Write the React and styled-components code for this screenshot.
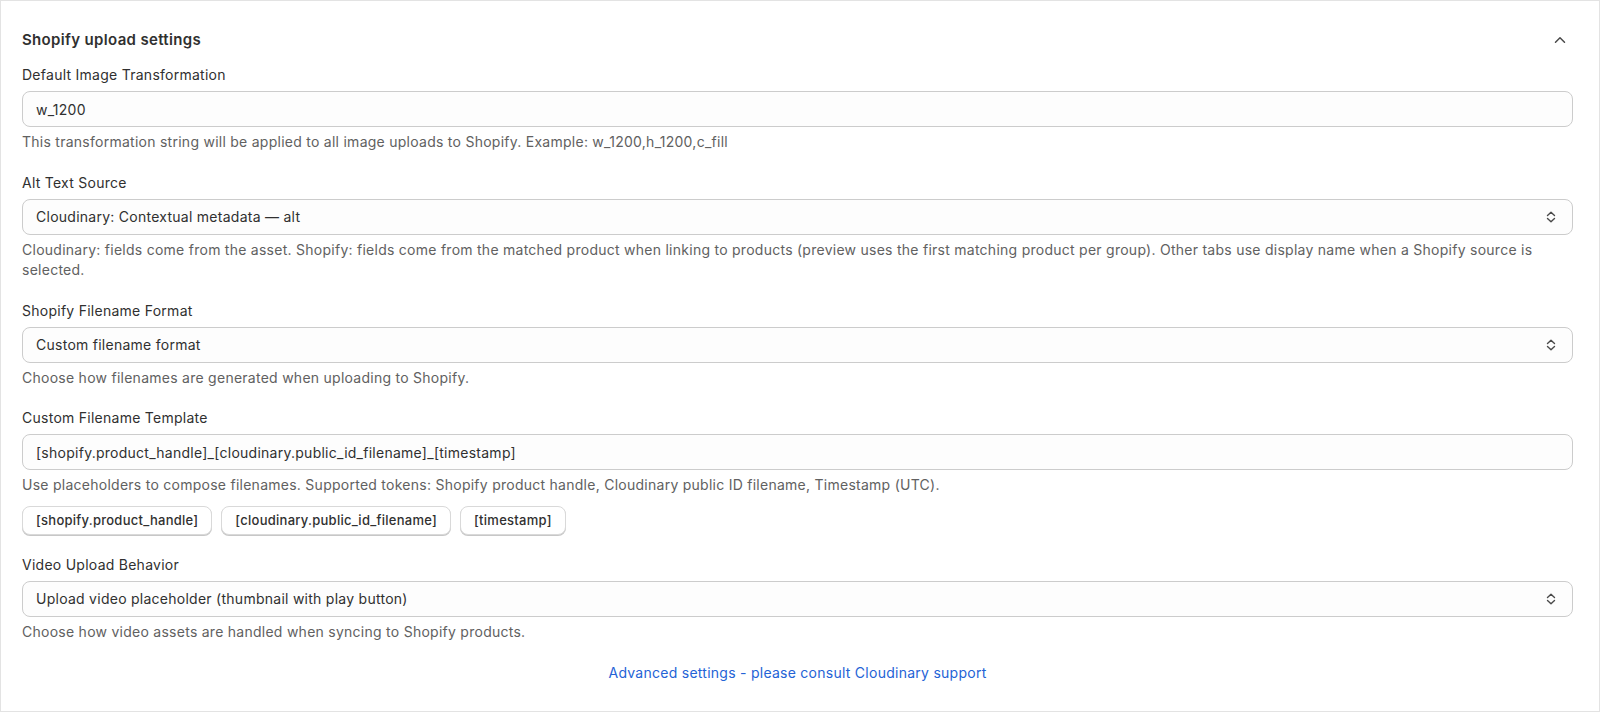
import styled, { createGlobalStyle } from "styled-components";

const GlobalStyle = createGlobalStyle`
  * {
    box-sizing: border-box;
  }
  body {
    margin: 0;
    background: #ffffff;
    font-family: Inter, "Noto Sans", sans-serif;
    letter-spacing: 0.26px;
    color: #303030;
    -webkit-font-smoothing: antialiased;
  }
`;

const Card = styled.section`
  height: 100vh;
  overflow: hidden;
  border: 1px solid #e3e3e3;
  background: #ffffff;
  padding: 27px 26px 0 21px;
`;

const Header = styled.div`
  display: flex;
  align-items: center;
  justify-content: space-between;
  height: 24px;
`;

const Title = styled.h2`
  margin: 0;
  font-size: 15px;
  line-height: 24px;
  font-weight: 600;
  letter-spacing: 0.34px;
  color: #303030;
`;

const Toggle = styled.button`
  width: 20px;
  height: 20px;
  margin-right: 3px;
  padding: 0;
  border: none;
  background: transparent;
  display: flex;
  align-items: center;
  justify-content: center;
  cursor: pointer;
`;

const Fields = styled.div`
  display: flex;
  flex-direction: column;
  gap: 20px;
  margin-top: 13px;
`;

const Field = styled.div`
  display: flex;
  flex-direction: column;
`;

const Label = styled.label`
  font-size: 14px;
  line-height: 20px;
  color: #303030;
  margin-bottom: 6px;
`;

const TextInput = styled.input`
  height: 36px;
  width: 100%;
  padding: 0 13px;
  border: 1px solid #cccccc;
  border-radius: 8px;
  background: #fdfdfd;
  font-family: inherit;
  font-size: 14px;
  letter-spacing: inherit;
  color: #303030;
  outline: none;
`;

const SelectWrap = styled.div`
  position: relative;
`;

const Select = styled.select`
  appearance: none;
  height: 36px;
  width: 100%;
  padding: 0 40px 0 13px;
  border: 1px solid #cccccc;
  border-radius: 8px;
  background: #fdfdfd;
  font-family: inherit;
  font-size: 14px;
  letter-spacing: inherit;
  color: #303030;
  outline: none;
`;

const SelectIcon = styled.span`
  position: absolute;
  right: 12px;
  top: 8px;
  width: 20px;
  height: 20px;
  pointer-events: none;
`;

const Help = styled.p`
  margin: 5px 0 0;
  font-size: 14px;
  line-height: 20.5px;
  color: #616161;
`;

const Chips = styled.div`
  display: flex;
  gap: 9px;
  margin-top: 10px;
`;

const Chip = styled.button`
  height: 29px;
  padding: 0 13px;
  border: 1px solid #d9d9d9;
  border-radius: 8px;
  background: #ffffff;
  box-shadow: 0 1px 0 #c7c7c7;
  font-family: inherit;
  font-size: 13px;
  font-weight: 500;
  letter-spacing: inherit;
  color: #303030;
  cursor: pointer;
`;

const Footer = styled.div`
  display: flex;
  justify-content: center;
  margin-top: 21px;
`;

const Link = styled.a`
  font-size: 14px;
  line-height: 20px;
  color: #2463d6;
  text-decoration: none;
  cursor: pointer;
`;

const ChevronUp = () => (
  <svg width="20" height="20" viewBox="0 0 20 20" fill="none">
    <path d="M5.5 12.2L10 7.7L14.5 12.2" stroke="#4a4a4a" strokeWidth="1.5" strokeLinecap="round" strokeLinejoin="round" />
  </svg>
);

const UpDown = () => (
  <svg width="20" height="20" viewBox="0 0 20 20" fill="none">
    <path d="M6.5 8.5L10 5.2L13.5 8.5" stroke="#4a4a4a" strokeWidth="1.4" strokeLinecap="round" strokeLinejoin="round" />
    <path d="M6.5 11.5L10 14.8L13.5 11.5" stroke="#4a4a4a" strokeWidth="1.4" strokeLinecap="round" strokeLinejoin="round" />
  </svg>
);

const SelectField = ({ value, options }) => (
  <SelectWrap>
    <Select defaultValue={value}>
      {options.map((o) => (
        <option key={o}>{o}</option>
      ))}
    </Select>
    <SelectIcon>
      <UpDown />
    </SelectIcon>
  </SelectWrap>
);

const tokens = ["[shopify.product_handle]", "[cloudinary.public_id_filename]", "[timestamp]"];

const App = () => {
  return (
    <>
      <GlobalStyle />
      <Card>
        <Header>
          <Title>Shopify upload settings</Title>
          <Toggle aria-label="Collapse">
            <ChevronUp />
          </Toggle>
        </Header>
        <Fields>
          <Field>
            <Label>Default Image Transformation</Label>
            <TextInput defaultValue="w_1200" />
            <Help>This transformation string will be applied to all image uploads to Shopify. Example: w_1200,h_1200,c_fill</Help>
          </Field>
          <Field>
            <Label>Alt Text Source</Label>
            <SelectField value="Cloudinary: Contextual metadata — alt" options={["Cloudinary: Contextual metadata — alt", "Cloudinary: Display name", "Shopify: Product title"]} />
            <Help>
              Cloudinary: fields come from the asset. Shopify: fields come from the matched product when linking to products (preview uses the first matching product per group). Other tabs use display name when a Shopify source is selected.
            </Help>
          </Field>
          <Field>
            <Label>Shopify Filename Format</Label>
            <SelectField value="Custom filename format" options={["Custom filename format", "Cloudinary public ID"]} />
            <Help>Choose how filenames are generated when uploading to Shopify.</Help>
          </Field>
          <Field>
            <Label>Custom Filename Template</Label>
            <TextInput defaultValue="[shopify.product_handle]_[cloudinary.public_id_filename]_[timestamp]" />
            <Help>Use placeholders to compose filenames. Supported tokens: Shopify product handle, Cloudinary public ID filename, Timestamp (UTC).</Help>
            <Chips>
              {tokens.map((t) => (
                <Chip key={t}>{t}</Chip>
              ))}
            </Chips>
          </Field>
          <Field>
            <Label>Video Upload Behavior</Label>
            <SelectField value="Upload video placeholder (thumbnail with play button)" options={["Upload video placeholder (thumbnail with play button)", "Skip video assets"]} />
            <Help>Choose how video assets are handled when syncing to Shopify products.</Help>
          </Field>
        </Fields>
        <Footer>
          <Link>Advanced settings - please consult Cloudinary support</Link>
        </Footer>
      </Card>
    </>
  );
};

export default App;
